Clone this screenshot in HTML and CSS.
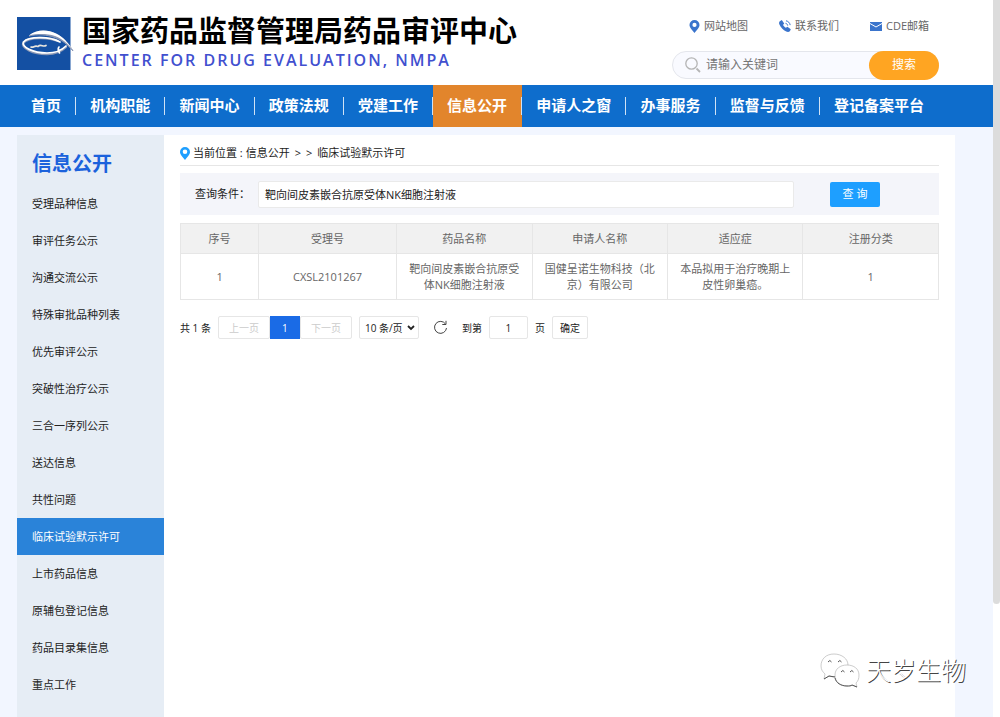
FILE: index.html
```html
<!DOCTYPE html>
<html lang="zh-CN">
<head>
<meta charset="utf-8">
<title>国家药品监督管理局药品审评中心</title>
<link rel="stylesheet" href="styles.css">
</head>
<body>
<div class="page">
  <header class="header">
    <svg class="logo" viewBox="0 0 57 54" aria-hidden="true">
      <rect width="53.500" height="53" fill="#1450a3"/>
      <path d="M12 19C19 13 30 12.500 39 17C47 21 52 27 56 34C50 27 45 23 38 20.500C30 17.500 20 17 12 19z" fill="#8b98b5" stroke="#8b98b5"/>
      <path d="M12 18.500C19 12.500 30 12 39 16.500C47 20.500 51 26 55.500 32.500C50 26 45 21.500 38 19C30 16.500 20 16.500 12 18.500z" fill="#fff"/>
      <g fill="none" stroke-linecap="round">
        <path d="M41 24C32 20 12 19.500 6.500 25.500C4 31 16 37 30 37C38 37 45 34 49 30" stroke="#8b98b5" stroke-width="2.400"/>
        <path d="M43 25C33 19.500 12 19 6.500 25C4 30 16 36 30 36C38 36 45 33 49 29M42 30C40 32 42 34 42.500 36" stroke="#fff" stroke-width="1.700"/>
        <path d="M14 30C17 31 17 28 21 29.500C24 26.500 26 30.500 29 28.500" stroke="#e9e6de" stroke-width="1.700"/>
      </g>
    </svg>
    <div class="brand">
      <h1 class="brand-cn">国家药品监督管理局药品审评中心</h1>
      <p class="brand-en">CENTER FOR DRUG EVALUATION, NMPA</p>
    </div>
    <div class="tools">
      <div class="links">
        <a href="#"><svg width="11" height="13" viewBox="0 0 11 13"><path d="M5.500 0a5 5 0 0 1 5 5c0 3-3 5-5 8C3.500 10 .5 8 .5 5a5 5 0 0 1 5-5zm0 2.800a2.100 2.100 0 1 0 0 4.200 2.100 2.100 0 0 0 0-4.200z" fill="#3a74cc"/></svg>网站地图</a>
        <a href="#"><svg width="12" height="12" viewBox="0 0 12 12"><path d="M.8 1.300 2.800 0 5.200 3.500 4 5C4.800 6.200 5.600 7 6.900 7.800l1.500-1.100 3.400 2.500-.8 1.700c-.8 1.200-2.400 1.300-3.800.6C4.200 10 1.600 7.300.3 4.200-.1 2.900 0 1.900.8 1.300z" fill="#3a74cc"/><path d="M6.500 3.300c1.200.2 2 1 2.200 2.300M7 .8c2.200.4 3.800 2 4.200 4.300" stroke="#3a74cc" fill="none"/></svg>联系我们</a>
        <a href="#"><svg width="12" height="9" viewBox="0 0 12 9"><path d="M0 0h12v9H0z" fill="#3a74cc"/><path d="M0 1.500 6 5l6-3.500" stroke="#fff" fill="none"/></svg>CDE邮箱</a>
      </div>
      <form class="search">
        <svg width="16" height="16" viewBox="0 0 16 16"><circle cx="6.500" cy="6.500" r="5.700" fill="none" stroke="#b5b5b5" stroke-width="1.300"/><path d="m11.500 11.500 3.500 3.500" stroke="#b5b5b5" stroke-width="1.800"/></svg>
        <input type="text" placeholder="请输入关键词" aria-label="请输入关键词">
        <button type="button">搜索</button>
      </form>
    </div>
  </header>

  <nav class="nav">
    <ul>
      <li><a href="#">首页</a></li>
      <li><a href="#">机构职能</a></li>
      <li><a href="#">新闻中心</a></li>
      <li><a href="#">政策法规</a></li>
      <li><a href="#">党建工作</a></li>
      <li class="active"><a href="#">信息公开</a></li>
      <li><a href="#">申请人之窗</a></li>
      <li><a href="#">办事服务</a></li>
      <li><a href="#">监督与反馈</a></li>
      <li><a href="#">登记备案平台</a></li>
    </ul>
  </nav>

  <div class="body">
    <aside class="sidebar">
      <h2>信息公开</h2>
      <ul>
        <li><a href="#">受理品种信息</a></li>
        <li><a href="#">审评任务公示</a></li>
        <li><a href="#">沟通交流公示</a></li>
        <li><a href="#">特殊审批品种列表</a></li>
        <li><a href="#">优先审评公示</a></li>
        <li><a href="#">突破性治疗公示</a></li>
        <li><a href="#">三合一序列公示</a></li>
        <li><a href="#">送达信息</a></li>
        <li><a href="#">共性问题</a></li>
        <li><a class="current" href="#">临床试验默示许可</a></li>
        <li><a href="#">上市药品信息</a></li>
        <li><a href="#">原辅包登记信息</a></li>
        <li><a href="#">药品目录集信息</a></li>
        <li><a href="#">重点工作</a></li>
      </ul>
    </aside>

    <main class="main">
      <div class="crumbs">
        <svg width="10" height="13" viewBox="0 0 10 13"><path d="M5 0a5 5 0 0 1 5 5c0 3-3 5-5 8C3 10 0 8 0 5a5 5 0 0 1 5-5zm0 2.500a2.300 2.300 0 1 0 0 4.600 2.300 2.300 0 0 0 0-4.600z" fill="#1e9fff"/></svg>
        <span>当前位置 :</span><a href="#">信息公开</a><span class="arrows">&gt; &gt;</span><a href="#">临床试验默示许可</a>
      </div>

      <form class="filter">
        <label for="keyword">查询条件：</label>
        <input id="keyword" type="text" value="靶向间皮素嵌合抗原受体NK细胞注射液">
        <button type="button">查 询</button>
      </form>

      <table class="results">
        <colgroup><col class="col-no"><col class="col-id"><col><col><col><col></colgroup>
        <thead>
          <tr><th>序号</th><th>受理号</th><th>药品名称</th><th>申请人名称</th><th>适应症</th><th>注册分类</th></tr>
        </thead>
        <tbody>
          <tr><td>1</td><td>CXSL2101267</td><td>靶向间皮素嵌合抗原受体NK细胞注射液</td><td>国健呈诺生物科技（北京）有限公司</td><td>本品拟用于治疗晚期上皮性卵巢癌。</td><td>1</td></tr>
        </tbody>
      </table>

      <div class="pager">
        <span>共 1 条</span>
        <div class="pages">
          <button type="button" disabled>上一页</button><button type="button" class="on">1</button><button type="button" disabled>下一页</button>
        </div>
        <div class="size">
          <select aria-label="每页条数"><option>10 条/页</option></select>
          <svg width="8" height="6" viewBox="0 0 8 6"><path d="m1 1 3 3 3-3" fill="none" stroke="#222" stroke-width="1.800"/></svg>
        </div>
        <button type="button" class="refresh" aria-label="刷新"><svg width="15" height="15" viewBox="0 0 15 15"><path d="M12.500 4A6 6 0 1 0 13.500 8M13 .8V4.500H9.300" fill="none" stroke="#444"/></svg></button>
        <label for="goto">到第</label>
        <input id="goto" type="text" value="1">
        <span>页</span>
        <button type="button" class="go">确定</button>
      </div>
    </main>
  </div>
</div>
<div class="scrollbar"><div class="thumb"></div></div>

<div class="watermark">
  <svg width="42" height="36" viewBox="0 0 42 36">
    <g fill="#fff" stroke="#aaa" stroke-width="0.600">
      <path d="M15 2C7 2 2 7 2 14c0 4 2 6 4 8l-1 5 5-3c9 3 19-2 19-11C29 7 23 2 15 2z"/>
      <path d="M28 13c-7 0-12 4-12 10 0 7 6 11 12 11 2 0 4 0 5-1l5 2-1-4c2-2 3-4 3-8 0-6-5-10-12-10z"/>
    </g>
    <path d="M9 10q2-3 3.500 0M19 10q2-3 3.500 0M22 20q2-3 3.500 0M31 20q2-3 3.500 0M16 26c1 5 6 8 12 8 2 0 4 0 5-1l5 2M5 27l5-3 6 1" fill="none" stroke="#555"/>
  </svg>
  <span>天岁生物</span>
</div>
</body>
</html>
```
FILE: styles.css
```css
* { box-sizing: border-box; }

body {
  margin: 0;
  display: flex;
  min-height: 100vh;
  background: #fff;
  color: #222;
  font: 11px/16px "Open Sans", "Noto Sans CJK SC", sans-serif;
}

h1, h2, p, ul { margin: 0; padding: 0; }
ul { list-style: none; }
a { color: inherit; text-decoration: none; }
svg { flex: none; }
button, input, select { font: inherit; color: inherit; margin: 0; outline: 0; }
button { padding: 0; cursor: pointer; }

.page {
  flex: 1;
  min-width: 0;
  display: flex;
  flex-direction: column;
  background: #f2f6ff;
}

.scrollbar { width: 7px; display: flex; }
.thumb { width: 7px; height: 84.2vh; background: #dcdcdc; border-radius: 0 0 4px 4px; }

/* Header */
.header {
  display: flex;
  height: 85px;
  padding: 16px 54px 0 17px;
  background: #fff;
}
.logo { width: 57px; height: 54px; margin-top: 1px; }
.brand { margin-left: 8px; white-space: nowrap; }
.brand-cn { font-size: 29px; line-height: 30px; font-weight: 700; color: #000; }
.brand-en {
  margin-top: 4px;
  font-size: 16px;
  line-height: 20px;
  font-weight: 600;
  letter-spacing: 2px;
  color: #4150cf;
}
.tools { margin-left: auto; width: 267px; }
.links { display: flex; justify-content: space-between; padding: 2px 10px 0 17px; color: #666; }
.links a { display: flex; align-items: center; gap: 4px; }
.search {
  display: flex;
  align-items: center;
  height: 28px;
  margin-top: 17px;
  padding-left: 12px;
  border: 1px solid #e4e6ec;
  border-radius: 14px;
  background: #f9faff;
  font-size: 12px;
}
.search input {
  flex: 1;
  min-width: 0;
  border: 0;
  background: none;
  padding: 0 5px;
}
.search input::placeholder { color: #757575; opacity: 1; }
.search button {
  width: 70px;
  height: 29px;
  border: 0;
  border-radius: 15px;
  background: #ffa522;
  color: #fff;
  margin-right: -1px;
}

/* Main navigation */
.nav { background: #0e6dcc; padding: 0 55px 0 17px; }
.nav ul { display: flex; }
.nav li {
  flex: 1 1 auto;
  display: flex;
  align-items: center;
  height: 42px;
  color: #fff;
  font-size: 15px;
  font-weight: 700;
  white-space: nowrap;
}
.nav a { flex: 1; text-align: center; line-height: 16px; padding: 0 14px 2px; border-right: 1px solid #cfe2f5; }
.nav li:last-child a { border-right: 0; }
.nav .active { background: #e2852c; }

/* Sidebar */
.body { flex: 1; display: flex; padding: 8px 38px 0 17px; }
.sidebar { width: 147px; background: #e6edf5; padding-top: 17px; }
.sidebar h2 {
  padding-left: 15px;
  margin-bottom: 9px;
  font-size: 20px;
  line-height: 24px;
  color: #1b62dc;
}
.sidebar a { display: block; padding-left: 15px; line-height: 37px; }
.sidebar .current { background: #2a83d9; color: #fff; }

/* Content */
.main { flex: 1; min-width: 0; padding: 7px 16px 0; background: #fff; }
.crumbs {
  display: flex;
  align-items: center;
  gap: 3px;
  height: 24px;
  padding-bottom: 1px;
  border-bottom: 1px solid #e6e6e6;
}
.arrows { padding: 0 2px; word-spacing: 2px; }

.filter {
  display: flex;
  align-items: center;
  height: 42px;
  margin-top: 7px;
  padding: 0 59px 0 15px;
  background: #f4f5fa;
}
.filter label { width: 63px; }
.filter input {
  flex: 1;
  min-width: 0;
  height: 27px;
  padding: 0 6px;
  border: 1px solid #eaeaea;
  border-radius: 2px;
  background: #fff;
}
.filter button {
  width: 50px;
  height: 25px;
  margin-left: 36px;
  border: 0;
  border-radius: 2px;
  background: #1e9fff;
  color: #fff;
}

.results {
  width: 100%;
  margin-top: 8px;
  border-collapse: collapse;
  table-layout: fixed;
  color: #666;
  text-align: center;
}
.col-no { width: 10.3%; }
.col-id { width: 18.2%; }
.results th, .results td { border: 1px solid #e6e6e6; padding: 0 12px; }
.results th { height: 30px; background: #f1f1f1; font-weight: 400; }
.results td { height: 46px; }

/* Pagination */
.pager { display: flex; align-items: center; gap: 7px; margin-top: 16px; font-size: 10px; }
.pager button, .pager input, .pager select {
  height: 23px;
  border: 1px solid #e6e6e6;
  border-radius: 2px;
  background: #fff;
}
.pages { display: flex; }
.pages button { width: 52px; }
.pages button:disabled { color: #ccc; cursor: default; }
.pages .on { width: 30px; border-color: #1a6be6; border-radius: 0; background: #1a6be6; color: #fff; }
.size { position: relative; }
.size select { width: 60px; padding: 0 5px; appearance: none; }
.size svg { position: absolute; right: 4px; top: 9px; pointer-events: none; }
.pager .refresh { display: flex; align-items: center; border: 0; margin: 0 7px; }
.pager input { width: 39px; text-align: center; padding: 0; }
.pager .go { width: 36px; }

/* Overlay mark */
.watermark {
  position: absolute;
  right: 34px;
  bottom: 29px;
  display: flex;
  align-items: center;
  gap: 5px;
  font-size: 25px;
  line-height: 36px;
  font-weight: 300;
  color: #fff;
  text-shadow: 1px 1px 0 #444;
}
```
